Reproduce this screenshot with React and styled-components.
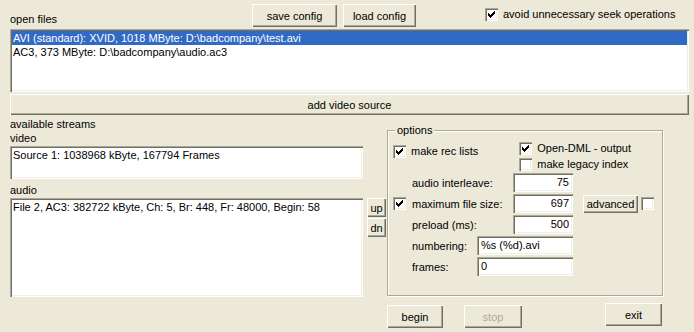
import React from "react";
import styled, { createGlobalStyle } from "styled-components";

const GlobalStyle = createGlobalStyle`
  html, body {
    margin: 0;
    padding: 0;
    background: #ece9d8;
  }
  body {
    font-family: "Liberation Sans", Arial, sans-serif;
    font-size: 11px;
    color: #000;
  }
`;

const Window = styled.div`
  width: 694px;
  height: 332px;
  box-sizing: border-box;
  padding: 4px 5px 0 10px;
  background: #ece9d8;
  display: flex;
  flex-direction: column;
  overflow: hidden;
`;

const TopRow = styled.div`
  display: flex;
  align-items: center;
  height: 23px;
`;

const Label = styled.div`
  line-height: 14px;
  white-space: nowrap;
  width: ${(p) => (p.$width ? `${p.$width}px` : "auto")};
  flex-shrink: 0;
  margin-top: ${(p) => p.$mt || 0}px;
`;

const Button = styled.button`
  font-family: inherit;
  font-size: 11px;
  color: ${(p) => (p.disabled ? "#aca899" : "#000")};
  background: #ece9d8;
  border: none;
  padding: 0;
  margin: 0;
  width: ${(p) => (p.$w ? `${p.$w}px` : "100%")};
  height: ${(p) => p.$h || 23}px;
  flex-shrink: 0;
  box-shadow: inset 1px 1px #fff, inset -1px -1px #716f64,
    inset -2px -2px #aca899;
  cursor: default;
  white-space: nowrap;
`;

const CheckRow = styled.label`
  display: flex;
  align-items: center;
  gap: 5px;
  height: ${(p) => p.$h || 16}px;
  white-space: nowrap;
  margin-left: ${(p) => p.$ml || 0}px;
  margin-top: ${(p) => p.$mt || 0}px;
`;

const Box = styled.span`
  display: inline-block;
  width: 13px;
  height: 13px;
  flex-shrink: 0;
  background: #fff;
  box-shadow: inset 1px 1px #aca899, inset 2px 2px #716f64,
    inset -1px -1px #fff, inset -2px -2px #f1efe2;
  margin-left: ${(p) => p.$ml || 0}px;
`;

const CHECK = [
  [0, 2], [1, 3], [2, 4], [3, 3], [4, 2], [5, 1], [6, 0],
];

const CheckBox = ({ checked, ml }) => (
  <Box $ml={ml}>
    {checked && (
      <svg width="13" height="13" viewBox="0 0 13 13" shapeRendering="crispEdges">
        {CHECK.map(([x, y]) => (
          <rect key={x} x={3 + x} y={3 + y} width="1" height="3" fill="#000" />
        ))}
      </svg>
    )}
  </Box>
);

const Sunken = styled.div`
  background: #fff;
  box-sizing: border-box;
  box-shadow: inset 1px 1px #aca899, inset 2px 2px #716f64,
    inset -1px -1px #fff, inset -2px -2px #f1efe2;
  padding: 2px;
  width: ${(p) => (p.$w ? `${p.$w}px` : "100%")};
  height: ${(p) => p.$h}px;
  margin-top: ${(p) => p.$mt || 0}px;
  flex-shrink: 0;
  overflow: hidden;
`;

const Item = styled.div`
  height: 14px;
  line-height: 14px;
  padding-left: 1px;
  white-space: nowrap;
  background: ${(p) => (p.$selected ? "#316ac5" : "transparent")};
  color: ${(p) => (p.$selected ? "#fff" : "#000")};
`;

const Bottom = styled.div`
  display: flex;
  margin-top: 2px;
`;

const LeftCol = styled.div`
  width: 353px;
  display: flex;
  flex-direction: column;
`;

const Arrows = styled.div`
  display: flex;
  flex-direction: column;
  gap: 1px;
  margin: 81px 0 0 4px;
`;

const RightCol = styled.div`
  width: 276px;
  margin: 13px 0 0 1px;
  display: flex;
  flex-direction: column;
`;

const Group = styled.div`
  position: relative;
  height: 166px;
  box-sizing: border-box;
  border: 1px solid #aca899;
  box-shadow: inset 1px 1px #fff, 1px 1px #fff;
  padding: 9px 0 0 5px;
  display: flex;
  flex-direction: column;
`;

const GroupTitle = styled.span`
  position: absolute;
  top: -8px;
  left: 7px;
  padding: 0 2px 0 2px;
  background: #ece9d8;
  line-height: 14px;
`;

const OptionsHead = styled.div`
  display: flex;
  align-items: flex-start;
`;

const OptionsStack = styled.div`
  display: flex;
  flex-direction: column;
`;

const Form = styled.div`
  display: flex;
  flex-direction: column;
  gap: 2px;
  margin-top: 1px;
`;

const FormRow = styled.div`
  display: flex;
  align-items: center;
  height: 19px;
`;

const Slot = styled.div`
  width: 19px;
  flex-shrink: 0;
  display: flex;
  align-items: center;
`;

const Field = styled.div`
  width: ${(p) => p.$w}px;
  height: 19px;
  box-sizing: border-box;
  background: #fff;
  box-shadow: inset 1px 1px #aca899, inset 2px 2px #716f64,
    inset -1px -1px #fff, inset -2px -2px #f1efe2;
  padding: 0 4px;
  line-height: 19px;
  text-align: ${(p) => (p.$num ? "right" : "left")};
  flex-shrink: 0;
  white-space: nowrap;
`;

const ButtonRow = styled.div`
  display: flex;
  align-items: flex-start;
  margin-top: 8px;
`;

export default function App() {
  return (
    <Window>
      <GlobalStyle />
      <TopRow>
        <Label $width={242} $mt={6}>open files</Label>
        <Button $w={85}>save config</Button>
        <Button $w={73} style={{ marginLeft: 6 }}>load config</Button>
        <CheckRow $ml={69} $mt={-3}>
          <CheckBox checked />
          avoid unnecessary seek operations
        </CheckRow>
      </TopRow>

      <Sunken $w={679} $h={63} $mt={2}>
        <Item $selected>AVI (standard): XVID, 1018 MByte: D:\badcompany\test.avi</Item>
        <Item>AC3, 373 MByte: D:\badcompany\audio.ac3</Item>
      </Sunken>

      <Button $w={679} $h={21} style={{ marginTop: 2 }}>add video source</Button>

      <Bottom>
        <LeftCol>
          <Label>available streams</Label>
          <Label>video</Label>
          <Sunken $h={33} $mt={1}>
            <Item>Source 1: 1038968 kByte, 167794 Frames</Item>
          </Sunken>
          <Label $mt={4}>audio</Label>
          <Sunken $h={99} $mt={1}>
            <Item>File 2, AC3: 382722 kByte, Ch: 5, Br: 448, Fr: 48000, Begin: 58</Item>
          </Sunken>
        </LeftCol>

        <Arrows>
          <Button $w={19} $h={19}>up</Button>
          <Button $w={19} $h={19}>dn</Button>
        </Arrows>

        <RightCol>
          <Group>
            <GroupTitle>options</GroupTitle>
            <OptionsHead>
              <CheckRow $mt={3}>
                <CheckBox checked />
                make rec lists
              </CheckRow>
              <OptionsStack style={{ marginLeft: 41 }}>
                <CheckRow>
                  <CheckBox checked />
                  Open-DML - output
                </CheckRow>
                <CheckRow>
                  <CheckBox />
                  make legacy index
                </CheckRow>
              </OptionsStack>
            </OptionsHead>

            <Form>
              <FormRow>
                <Slot />
                <Label $width={101}>audio interleave:</Label>
                <Field $w={60} $num>75</Field>
              </FormRow>
              <FormRow>
                <Slot>
                  <CheckBox checked />
                </Slot>
                <Label $width={101}>maximum file size:</Label>
                <Field $w={60} $num>697</Field>
                <Button $w={55} $h={18} style={{ marginLeft: 10 }}>advanced</Button>
                <CheckBox ml={3} />
              </FormRow>
              <FormRow>
                <Slot />
                <Label $width={101}>preload (ms):</Label>
                <Field $w={60} $num>500</Field>
              </FormRow>
              <FormRow>
                <Slot />
                <Label $width={65}>numbering:</Label>
                <Field $w={96}>%s (%d).avi</Field>
              </FormRow>
              <FormRow>
                <Slot />
                <Label $width={65}>frames:</Label>
                <Field $w={96}>0</Field>
              </FormRow>
            </Form>
          </Group>

          <ButtonRow>
            <Button $w={56} style={{ marginTop: 1 }}>begin</Button>
            <Button $w={58} disabled style={{ marginLeft: 21, marginTop: 1 }}>stop</Button>
            <Button $w={57} style={{ marginLeft: 83, marginTop: -1 }}>exit</Button>
          </ButtonRow>
        </RightCol>
      </Bottom>
    </Window>
  );
}
